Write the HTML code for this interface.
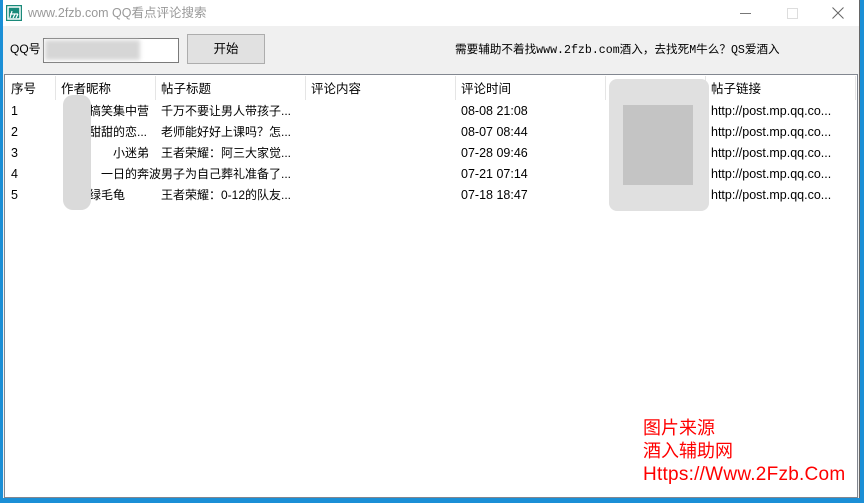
<!DOCTYPE html>
<html><head><meta charset="utf-8"><style>
body{margin:0;width:864px;height:503px;background:#1b8fd6;position:relative;overflow:hidden;font-family:"Liberation Sans","Noto Sans CJK SC",sans-serif;}
.win{position:absolute;left:3px;top:0;width:856px;height:498px;background:#f0f0f0;border-right:1px solid #666;}
.title{position:absolute;left:0;top:0;width:856px;height:26px;background:#fff;}
.t{position:absolute;left:25px;top:5px;font-size:12.5px;line-height:16px;color:#999;}
.tb{position:absolute;font-size:12px;line-height:16px;color:#000;}
.list{position:absolute;left:1px;top:74px;width:852px;height:422px;background:#fff;border:1px solid #828790;}
.h{position:absolute;top:6px;font-size:12.5px;line-height:16px;color:#000;}
.dv{position:absolute;top:1px;width:1px;height:24px;background:#e5e5e5;}
.c{position:absolute;font-size:12px;line-height:16px;color:#000;white-space:nowrap;}
.d{font-size:12.5px;}
.red{position:absolute;left:640px;color:#f00;font-size:18px;line-height:23px;}
.blur{position:absolute;background:#d3d3d3;}
</style></head><body>
<div class="win">
<div class="title">
<svg style="position:absolute;left:3px;top:5px" width="16" height="16"><rect width="16" height="16" fill="#1a8a7a"/><rect x="2" y="2" width="12" height="12" fill="none" stroke="#fff" stroke-width="1.5"/><path d="M4 9h8M6 6l-2 7M9 9l-2 4M12 9l-2 4" stroke="#fff" stroke-width="1.2" fill="none"/></svg>
<div class="t">www.2fzb.com QQ看点评论搜索</div>
<div style="position:absolute;left:737px;top:13px;width:11px;height:1px;background:#777"></div>
<div style="position:absolute;left:784px;top:8px;width:9px;height:9px;border:1px solid #ddd"></div>
<svg style="position:absolute;left:829px;top:7px" width="12" height="12"><path d="M0.5 0.5L11.5 11.5M11.5 0.5L0.5 11.5" stroke="#666" stroke-width="1"/></svg>
</div>
<div class="tb" style="left:7px;top:41px">QQ号</div>
<div style="position:absolute;left:40px;top:38px;width:134px;height:23px;background:#fff;border:1px solid #7a7a7a"></div>
<div class="blur" style="left:42px;top:40px;width:95px;height:20px;background:#d6d6d6;filter:blur(2px)"></div>
<div style="position:absolute;left:184px;top:34px;width:76px;height:28px;background:#e1e1e1;border:1px solid #adadad;font-size:12.5px;text-align:center;line-height:28px">开始</div>
<div class="tb" style="left:452px;top:43px;font-family:'Liberation Mono','Noto Sans CJK SC',monospace;font-size:11.6px;">需要辅助不着找www.2fzb.com酒入，去找死M牛么？QS爱酒入</div>
<div class="list">
<div class="h" style="left:6px">序号</div><div class="dv" style="left:50px"></div>
<div class="h" style="left:56px">作者昵称</div><div class="dv" style="left:150px"></div>
<div class="h" style="left:156px">帖子标题</div><div class="dv" style="left:300px"></div>
<div class="h" style="left:306px">评论内容</div><div class="dv" style="left:450px"></div>
<div class="h" style="left:456px">评论时间</div><div class="dv" style="left:600px"></div>
<div class="h" style="left:606px">评论昵称</div><div class="dv" style="left:700px"></div>
<div class="h" style="left:706px">帖子链接</div><div class="dv" style="left:850px"></div>
<div class="c d" style="left:6px;top:28px">1</div><div class="c d" style="left:6px;top:49px">2</div><div class="c d" style="left:6px;top:70px">3</div><div class="c d" style="left:6px;top:91px">4</div><div class="c d" style="left:6px;top:112px">5</div>
<div class="c" style="left:84px;top:28px">搞笑集中营</div><div class="c" style="left:84px;top:49px">甜甜的恋...</div><div class="c" style="left:108px;top:70px">小迷弟</div><div class="c" style="left:96px;top:91px">一日的奔波</div><div class="c" style="left:84px;top:112px">绿毛龟</div>
<div class="c" style="left:156px;top:28px">千万不要让男人带孩子...</div><div class="c" style="left:156px;top:49px">老师能好好上课吗？怎...</div><div class="c" style="left:156px;top:70px">王者荣耀：阿三大家觉...</div><div class="c" style="left:156px;top:91px">男子为自己葬礼准备了...</div><div class="c" style="left:156px;top:112px">王者荣耀：0-12的队友...</div>
<div class="c d" style="left:456px;top:28px">08-08 21:08</div><div class="c d" style="left:456px;top:49px">08-07 08:44</div><div class="c d" style="left:456px;top:70px">07-28 09:46</div><div class="c d" style="left:456px;top:91px">07-21 07:14</div><div class="c d" style="left:456px;top:112px">07-18 18:47</div>
<div class="c d" style="left:706px;top:28px">http://post.mp.qq.co...</div><div class="c d" style="left:706px;top:49px">http://post.mp.qq.co...</div><div class="c d" style="left:706px;top:70px">http://post.mp.qq.co...</div><div class="c d" style="left:706px;top:91px">http://post.mp.qq.co...</div><div class="c d" style="left:706px;top:112px">http://post.mp.qq.co...</div>
<div class="blur" style="left:58px;top:20px;width:28px;height:115px;background:#dadada;border-radius:10px"></div>
<div class="blur" style="left:604px;top:4px;width:100px;height:132px;background:#e0e0e0;border-radius:8px"></div>
<div class="blur" style="left:618px;top:30px;width:70px;height:80px;background:#c4c4c4"></div>
</div>
<div class="red" style="top:417px">图片来源<br>酒入辅助网<br><span style="font-size:19px;letter-spacing:0.25px">Https://Www.2Fzb.Com</span></div>
</div>
</body></html>
